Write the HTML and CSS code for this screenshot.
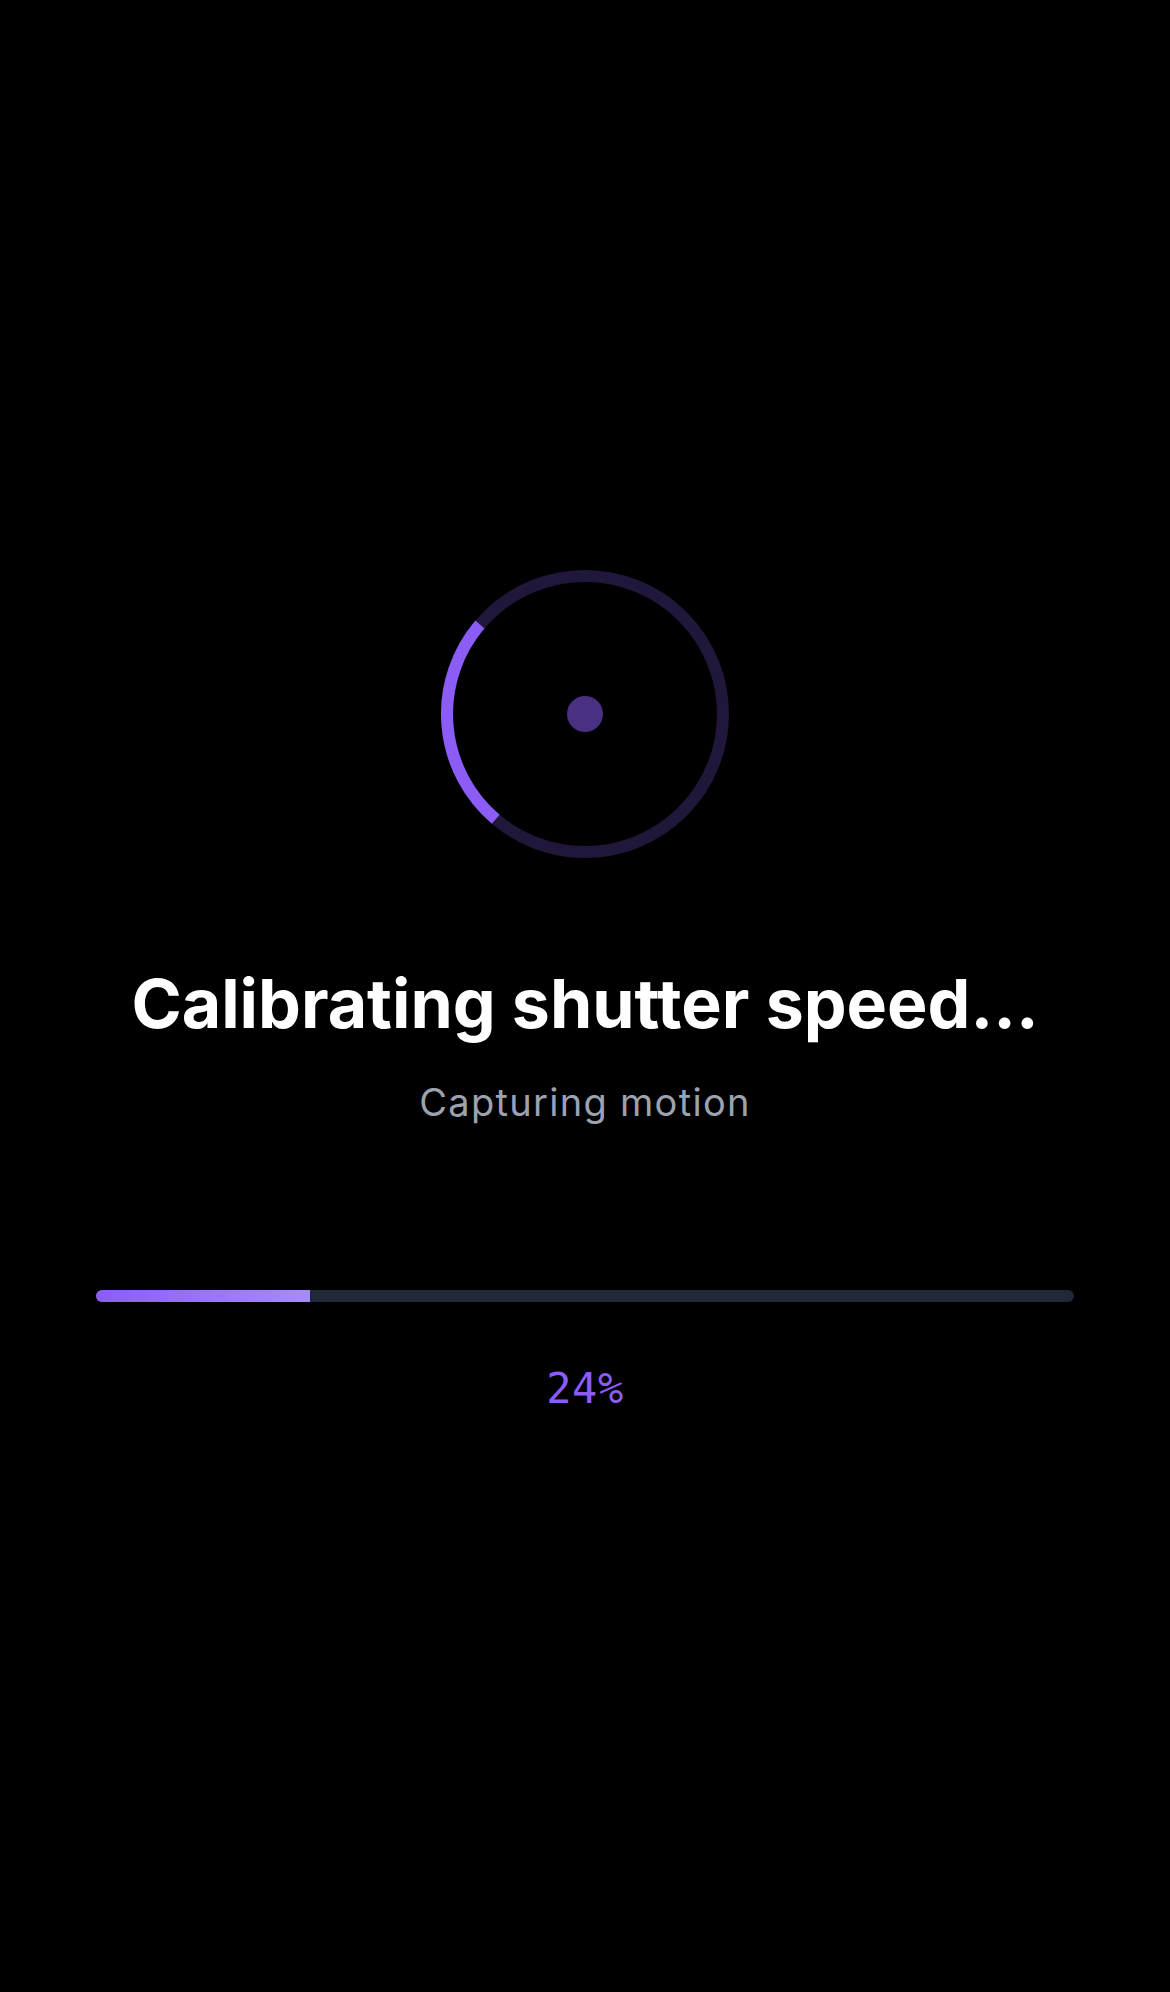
FILE: index.html
```html
<!DOCTYPE html>
<html lang="en">
<head>
<meta charset="utf-8">
<title>Calibrating</title>
<link rel="stylesheet" href="styles.css">
</head>
<body>
<main class="screen">
  <div class="spinner">
    <svg width="288" height="288" viewBox="0 0 288 288">
      <circle class="track" cx="144" cy="144" r="138" fill="none" stroke-width="12"/>
      <circle class="arc" cx="144" cy="144" r="138" fill="none" stroke-width="12" stroke-dasharray="217 651" transform="rotate(130.3 144 144)"/>
    </svg>
    <span class="dot"></span>
  </div>
  <h1 class="title">Calibrating shutter speed...</h1>
  <p class="subtitle">Capturing motion</p>
  <div class="bar"><div class="bar-fill" style="width:21.9%"></div></div>
  <p class="percent">24%</p>
</main>
</body>
</html>
```
FILE: styles.css
```css
* { box-sizing: border-box; }
html, body { margin: 0; padding: 0; background: #000; }
body { font-family: Inter, "Noto Sans", sans-serif; color: #fff; }
.screen {
  min-height: 1992px;
  display: flex;
  flex-direction: column;
  align-items: center;
  justify-content: flex-start;
  padding: 570px 96px 0;
}
.spinner {
  position: relative;
  width: 288px;
  height: 288px;
  flex-shrink: 0;
}
.spinner svg { display: block; }
.track { stroke: #21173a; }
.arc { stroke: #8b5cf6; }
.dot {
  position: absolute;
  left: 126px;
  top: 126px;
  width: 36px;
  height: 36px;
  border-radius: 50%;
  background: #4a3082;
}
.title {
  margin: 111px 0 0;
  font-size: 68px;
  line-height: 1;
  font-weight: 700;
  letter-spacing: 0;
  white-space: nowrap;
}
.subtitle {
  margin: 43px 0 0;
  font-size: 38px;
  line-height: 1.2;
  letter-spacing: 1.3px;
  color: #9ca3af;
}
.bar {
  margin-top: 164px;
  width: 100%;
  height: 12px;
  border-radius: 6px;
  background: #1f2937;
  overflow: hidden;
  flex-shrink: 0;
}
.bar-fill {
  height: 100%;
  background: linear-gradient(90deg, #8b5cf6, #a78bfa);
}
.percent {
  margin: 62px 0 0;
  font-family: "DejaVu Sans Mono", monospace;
  font-size: 42px;
  line-height: 1.2;
  letter-spacing: 0.5px;
  color: #8b5cf6;
}
```
